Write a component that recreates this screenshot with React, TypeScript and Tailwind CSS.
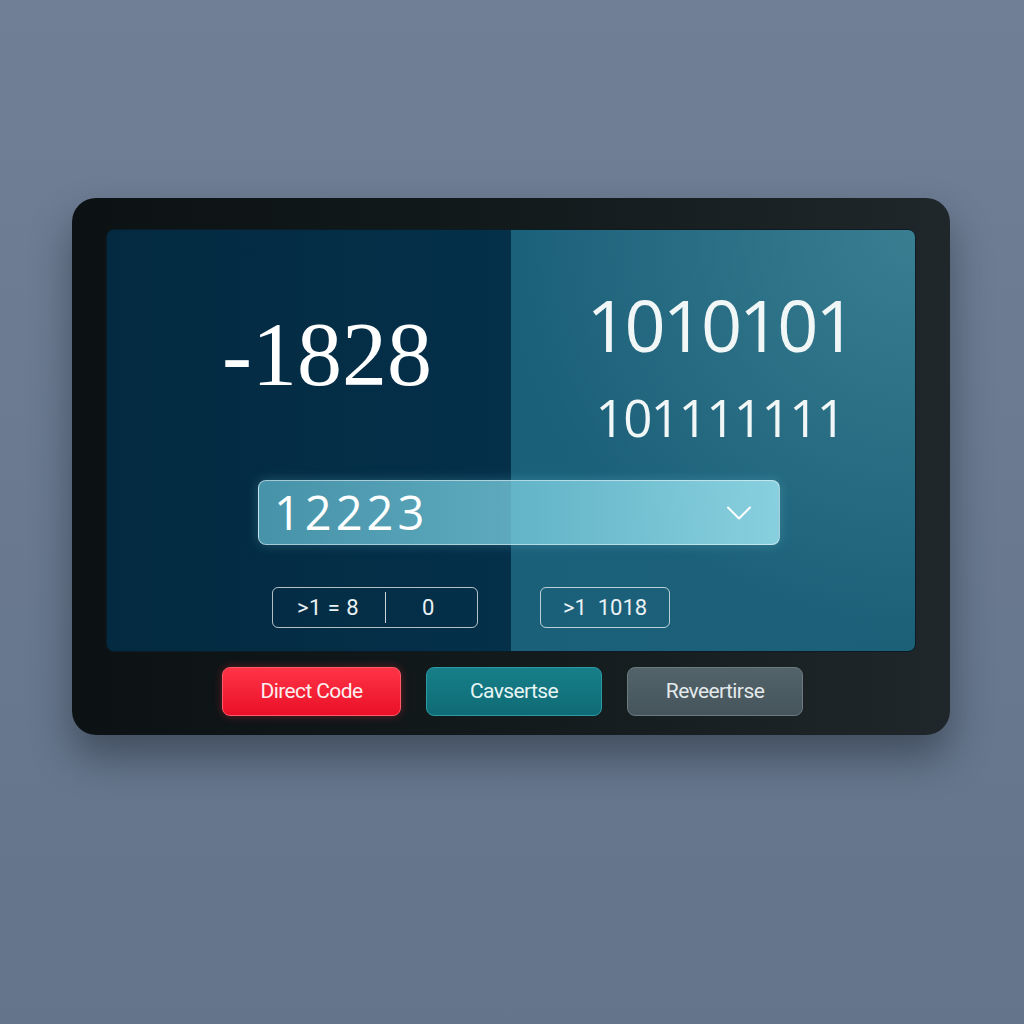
import { ChevronDown } from 'lucide-react';

export default function App() {
  return (
    <div className="min-h-[1024px] w-[1024px] bg-[linear-gradient(180deg,#717f96_0%,#6a7990_50%,#64748a_100%)] pt-[198px] pl-[72px]">
      {/* Device frame */}
      <div className="w-[878px] h-[537px] rounded-[24px] bg-[linear-gradient(90deg,#0c1214_0%,#121a1c_50%,#1f272a_100%)] shadow-[0_22px_40px_rgba(20,28,40,0.45)] pt-[31px] px-[34px] flex flex-col">
        {/* Screen */}
        <div className="relative w-[810px] h-[423px] rounded-lg border border-[#0b1c26] overflow-hidden bg-[radial-gradient(circle_at_100%_0%,rgba(80,150,165,0.55)_0%,rgba(80,150,165,0)_45%),linear-gradient(90deg,#032a41_0%,#05304a_50%,#1b6079_50%,#1c6078_100%)] flex flex-col">
          {/* Top values */}
          <div className="grid grid-cols-2 h-[250px]">
            <div className="flex justify-center pt-[80px] pl-[36px]">
              <span className="text-[90px] leading-none text-white font-['Liberation_Serif',serif]">
                -1828
              </span>
            </div>
            <div className="flex flex-col items-center pt-[58px] pl-[14px] text-[#f1f6f7] font-['Open_Sans',sans-serif]">
              <span className="text-[72px] leading-none tracking-[-3px]">1010101</span>
              <span className="mt-[32px] text-[51px] leading-none tracking-[-1.5px]">101111111</span>
            </div>
          </div>

          {/* Input */}
          <div className="ml-[151px] w-[522px] h-[65px] rounded-lg border border-white/50 bg-[linear-gradient(90deg,rgba(96,186,208,0.72)_0%,rgba(120,205,222,0.78)_50%,rgba(150,222,236,0.88)_100%)] flex items-center justify-between pl-[15px] pr-[18px] shadow-[0_0_12px_rgba(120,210,230,0.25)]">
            <span className="text-[47px] leading-none tracking-[4px] text-white font-['Open_Sans',sans-serif]">
              12223
            </span>
            <ChevronDown className="w-[44px] h-[44px] text-white" strokeWidth={1.1} />
          </div>

          {/* Pills */}
          <div className="flex mt-[42px] ml-[165px] gap-[62px] text-[#e9f1f4] font-['Roboto',sans-serif] text-[22px]">
            <div className="w-[206px] h-[41px] rounded-md border border-white/70 flex items-center">
              <span className="pl-[24px] w-[112px] tracking-[0.5px]">&gt;1 = 8</span>
              <span className="w-px h-[31px] bg-white/80" />
              <span className="pl-[36px]">0</span>
            </div>
            <div className="w-[130px] h-[41px] rounded-md border border-white/70 flex items-center justify-center">
              <span className="whitespace-pre">&gt;1  1018</span>
            </div>
          </div>
        </div>

        {/* Buttons */}
        <div className="flex gap-[25px] mt-[15px] ml-[116px] font-['Roboto',sans-serif] text-[21px] tracking-[-0.6px]">
          <button className="w-[179px] h-[49px] rounded-lg border border-[#ff5b68] bg-[linear-gradient(180deg,#ff3446_0%,#ea1027_100%)] text-[#fbeff0] shadow-[0_0_8px_rgba(255,40,60,0.35)]">
            Direct Code
          </button>
          <button className="w-[176px] h-[49px] rounded-lg border border-[#2b9aa4] bg-[linear-gradient(180deg,#177f89_0%,#0f6b75_100%)] text-[#e7f5f5]">
            Cavsertse
          </button>
          <button className="w-[176px] h-[49px] rounded-lg border border-[#6a7a80] bg-[linear-gradient(180deg,#53636a_0%,#45555b_100%)] text-[#e3e9ea]">
            Reveertirse
          </button>
        </div>
      </div>
    </div>
  );
}
